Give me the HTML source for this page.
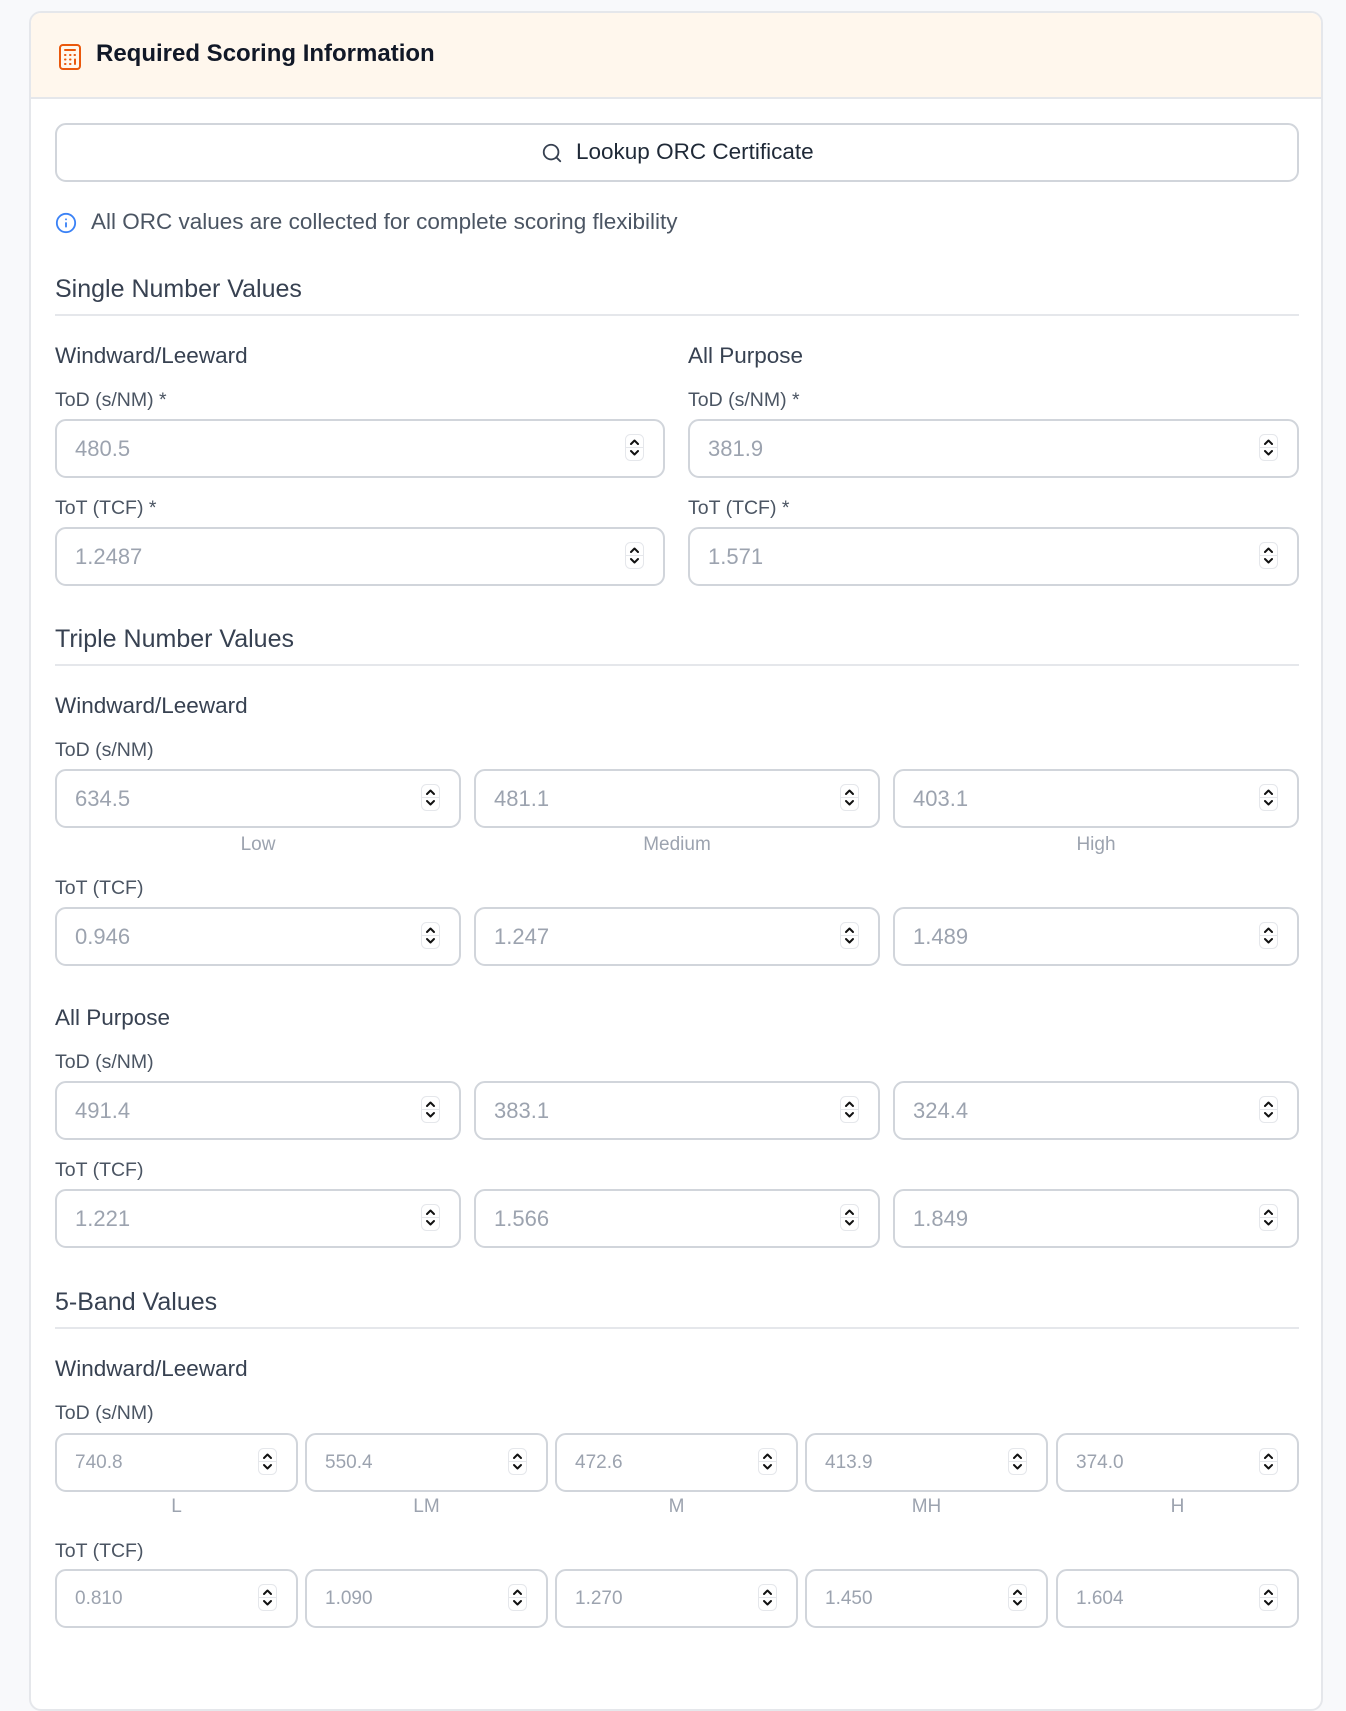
<!DOCTYPE html>
<html><head><meta charset="utf-8"><style>
*{box-sizing:border-box;margin:0;padding:0}
body{width:1346px;height:1648px;background:#f8f9fb;font-family:"Liberation Sans",sans-serif;position:relative;overflow:hidden}
.card{position:absolute;left:29px;top:11px;width:1294px;height:1700px;background:#fff;border:2px solid #e5e7eb;border-radius:12px;overflow:hidden}
.hdr{position:absolute;left:0;top:0;right:0;height:86px;background:#fff7ed;border-bottom:2px solid #e5e7eb}
.a{position:absolute}
.t{position:absolute;white-space:nowrap}
.h2{font-size:25px;color:#374151;margin-top:-2px}
.h3{font-size:22.5px;color:#374151;margin-top:-1px}
.lb{font-size:19.5px;color:#4b5563;margin-top:-1px}
.div{position:absolute;height:2px;background:#e5e7eb}
.in{position:absolute;height:59px;border:2px solid #d1d5db;border-radius:11px;background:#fff}
.in span{position:absolute;left:18px;top:15px;font-size:22px;color:#9ca3af}
.in.s span{font-size:19px;top:17px}
.in svg{position:absolute;right:19px;top:13px}
.cap{position:absolute;font-size:19px;color:#9ca3af;text-align:center;margin-top:-1px}
</style></head><body>
<svg width="0" height="0" style="position:absolute"><defs>
<symbol id="sp" viewBox="0 0 19 27"><rect x="0.5" y="0.5" width="18" height="26" rx="5" fill="#fff" stroke="#e5e7eb"/><line x1="1" y1="13.5" x2="18" y2="13.5" stroke="#e5e7eb"/><path d="M6 10l3.5-3.5L13 10" fill="none" stroke="#111" stroke-width="2" stroke-linecap="round" stroke-linejoin="round"/><path d="M6 17l3.5 3.5L13 17" fill="none" stroke="#111" stroke-width="2" stroke-linecap="round" stroke-linejoin="round"/></symbol>
</defs></svg>
<div class="card">
<div class="hdr"></div>
<svg class="a" style="left:27px;top:30px" width="24" height="28" viewBox="0 0 24 28" fill="none" stroke="#ea580c" stroke-width="2" stroke-linecap="round"><rect x="2" y="2" width="20" height="24" rx="3"/><line x1="7" y1="7" x2="17" y2="7"/><line x1="7" y1="12" x2="7.5" y2="12"/><line x1="12" y1="12" x2="12.5" y2="12"/><line x1="16.5" y1="12" x2="17" y2="12"/><line x1="7" y1="16.5" x2="7.5" y2="16.5"/><line x1="12" y1="16.5" x2="12.5" y2="16.5"/><line x1="7" y1="21" x2="7.5" y2="21"/><line x1="12" y1="21" x2="12.5" y2="21"/><line x1="17" y1="16.5" x2="17" y2="21"/></svg>
<div class="t" style="left:65px;top:27px;font-size:24px;font-weight:bold;color:#111827">Required Scoring Information</div>

<div class="a" style="left:24px;top:110px;width:1244px;height:59px;border:2px solid #d1d5db;border-radius:11px"></div>
<svg class="a" style="left:510px;top:129px" width="22" height="22" viewBox="0 0 24 24" fill="none" stroke="#374151" stroke-width="2" stroke-linecap="round"><circle cx="11" cy="11" r="8"/><path d="M21 21l-4.3-4.3"/></svg>
<div class="t" style="left:545px;top:126px;font-size:22.5px;color:#1f2937">Lookup ORC Certificate</div>

<svg class="a" style="left:24px;top:199px" width="22" height="22" viewBox="0 0 24 24" fill="none" stroke="#3b82f6" stroke-width="2" stroke-linecap="round"><circle cx="12" cy="12" r="10"/><path d="M12 16v-4M12 8h.01"/></svg>
<div class="t" style="left:60px;top:196px;font-size:22.5px;color:#4b5563">All ORC values are collected for complete scoring flexibility</div>

<div class="t h2" style="left:24px;top:264px">Single Number Values</div>
<div class="div" style="left:24px;top:301px;width:1244px"></div>
<div class="t h3" style="left:24px;top:331px">Windward/Leeward</div>
<div class="t h3" style="left:657px;top:331px">All Purpose</div>
<div class="t lb" style="left:24px;top:377px">ToD (s/NM) *</div>
<div class="t lb" style="left:657px;top:377px">ToD (s/NM) *</div>
<div class="in" style="left:24px;top:406px;width:610px"><span>480.5</span><svg width="19" height="27"><use href="#sp"/></svg></div>
<div class="in" style="left:657px;top:406px;width:611px"><span>381.9</span><svg width="19" height="27"><use href="#sp"/></svg></div>
<div class="t lb" style="left:24px;top:485px">ToT (TCF) *</div>
<div class="t lb" style="left:657px;top:485px">ToT (TCF) *</div>
<div class="in" style="left:24px;top:514px;width:610px"><span>1.2487</span><svg width="19" height="27"><use href="#sp"/></svg></div>
<div class="in" style="left:657px;top:514px;width:611px"><span>1.571</span><svg width="19" height="27"><use href="#sp"/></svg></div>

<div class="t h2" style="left:24px;top:614px">Triple Number Values</div>
<div class="div" style="left:24px;top:651px;width:1244px"></div>
<div class="t h3" style="left:24px;top:681px">Windward/Leeward</div>
<div class="t lb" style="left:24px;top:727px">ToD (s/NM)</div>
<div class="in" style="left:24px;top:756px;width:406px"><span>634.5</span><svg width="19" height="27"><use href="#sp"/></svg></div>
<div class="in" style="left:443px;top:756px;width:406px"><span>481.1</span><svg width="19" height="27"><use href="#sp"/></svg></div>
<div class="in" style="left:862px;top:756px;width:406px"><span>403.1</span><svg width="19" height="27"><use href="#sp"/></svg></div>
<div class="cap" style="left:24px;top:822px;width:406px">Low</div>
<div class="cap" style="left:443px;top:822px;width:406px">Medium</div>
<div class="cap" style="left:862px;top:822px;width:406px">High</div>
<div class="t lb" style="left:24px;top:865px">ToT (TCF)</div>
<div class="in" style="left:24px;top:894px;width:406px"><span>0.946</span><svg width="19" height="27"><use href="#sp"/></svg></div>
<div class="in" style="left:443px;top:894px;width:406px"><span>1.247</span><svg width="19" height="27"><use href="#sp"/></svg></div>
<div class="in" style="left:862px;top:894px;width:406px"><span>1.489</span><svg width="19" height="27"><use href="#sp"/></svg></div>

<div class="t h3" style="left:24px;top:993px">All Purpose</div>
<div class="t lb" style="left:24px;top:1039px">ToD (s/NM)</div>
<div class="in" style="left:24px;top:1068px;width:406px"><span>491.4</span><svg width="19" height="27"><use href="#sp"/></svg></div>
<div class="in" style="left:443px;top:1068px;width:406px"><span>383.1</span><svg width="19" height="27"><use href="#sp"/></svg></div>
<div class="in" style="left:862px;top:1068px;width:406px"><span>324.4</span><svg width="19" height="27"><use href="#sp"/></svg></div>
<div class="t lb" style="left:24px;top:1147px">ToT (TCF)</div>
<div class="in" style="left:24px;top:1176px;width:406px"><span>1.221</span><svg width="19" height="27"><use href="#sp"/></svg></div>
<div class="in" style="left:443px;top:1176px;width:406px"><span>1.566</span><svg width="19" height="27"><use href="#sp"/></svg></div>
<div class="in" style="left:862px;top:1176px;width:406px"><span>1.849</span><svg width="19" height="27"><use href="#sp"/></svg></div>

<div class="t h2" style="left:24px;top:1277px">5-Band Values</div>
<div class="div" style="left:24px;top:1314px;width:1244px"></div>
<div class="t h3" style="left:24px;top:1344px">Windward/Leeward</div>
<div class="t lb" style="left:24px;top:1390px">ToD (s/NM)</div>
<div class="in s" style="left:24px;top:1420px;width:243px"><span>740.8</span><svg width="19" height="27"><use href="#sp"/></svg></div>
<div class="in s" style="left:274px;top:1420px;width:243px"><span>550.4</span><svg width="19" height="27"><use href="#sp"/></svg></div>
<div class="in s" style="left:524px;top:1420px;width:243px"><span>472.6</span><svg width="19" height="27"><use href="#sp"/></svg></div>
<div class="in s" style="left:774px;top:1420px;width:243px"><span>413.9</span><svg width="19" height="27"><use href="#sp"/></svg></div>
<div class="in s" style="left:1025px;top:1420px;width:243px"><span>374.0</span><svg width="19" height="27"><use href="#sp"/></svg></div>
<div class="cap" style="left:24px;top:1484px;width:243px">L</div>
<div class="cap" style="left:274px;top:1484px;width:243px">LM</div>
<div class="cap" style="left:524px;top:1484px;width:243px">M</div>
<div class="cap" style="left:774px;top:1484px;width:243px">MH</div>
<div class="cap" style="left:1025px;top:1484px;width:243px">H</div>
<div class="t lb" style="left:24px;top:1528px">ToT (TCF)</div>
<div class="in s" style="left:24px;top:1556px;width:243px"><span>0.810</span><svg width="19" height="27"><use href="#sp"/></svg></div>
<div class="in s" style="left:274px;top:1556px;width:243px"><span>1.090</span><svg width="19" height="27"><use href="#sp"/></svg></div>
<div class="in s" style="left:524px;top:1556px;width:243px"><span>1.270</span><svg width="19" height="27"><use href="#sp"/></svg></div>
<div class="in s" style="left:774px;top:1556px;width:243px"><span>1.450</span><svg width="19" height="27"><use href="#sp"/></svg></div>
<div class="in s" style="left:1025px;top:1556px;width:243px"><span>1.604</span><svg width="19" height="27"><use href="#sp"/></svg></div>
</div>
</body></html>
